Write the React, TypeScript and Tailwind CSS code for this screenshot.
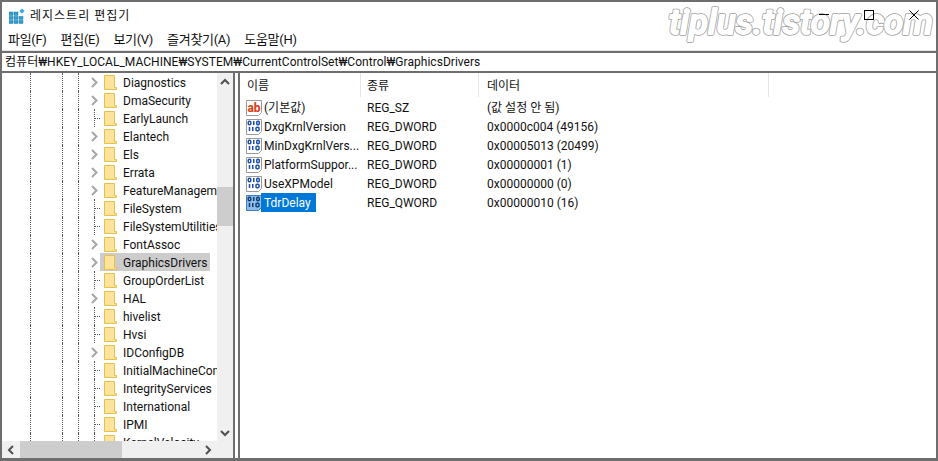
import React from 'react';

const tree: [string, boolean][] = [
  ['Diagnostics', true],
  ['DmaSecurity', true],
  ['EarlyLaunch', false],
  ['Elantech', true],
  ['Els', true],
  ['Errata', true],
  ['FeatureManagement', true],
  ['FileSystem', false],
  ['FileSystemUtilities', false],
  ['FontAssoc', true],
  ['GraphicsDrivers', true],
  ['GroupOrderList', false],
  ['HAL', true],
  ['hivelist', false],
  ['Hvsi', false],
  ['IDConfigDB', true],
  ['InitialMachineConfig', false],
  ['IntegrityServices', false],
  ['International', false],
  ['IPMI', false],
  ['KernelVelocity', false],
];

const values = [
  { name: '(기본값)', type: 'REG_SZ', data: '(값 설정 안 됨)', icon: 'ab' },
  { name: 'DxgKrnlVersion', type: 'REG_DWORD', data: '0x0000c004 (49156)', icon: 'bin' },
  { name: 'MinDxgKrnlVers...', type: 'REG_DWORD', data: '0x00005013 (20499)', icon: 'bin' },
  { name: 'PlatformSuppor...', type: 'REG_DWORD', data: '0x00000001 (1)', icon: 'bin' },
  { name: 'UseXPModel', type: 'REG_DWORD', data: '0x00000000 (0)', icon: 'bin' },
  { name: 'TdrDelay', type: 'REG_QWORD', data: '0x00000010 (16)', icon: 'bin' },
];

const menus = ['파일(F)', '편집(E)', '보기(V)', '즐겨찾기(A)', '도움말(H)'];

const AppIcon = () => (
  <svg width="16" height="16" viewBox="0 0 16 16">
    <g fill="#2a9fd8" stroke="#17688f" strokeWidth="0.4">
      <rect x="0" y="4" width="4" height="3.5" />
      <rect x="5" y="4" width="4" height="3.5" />
      <rect x="0" y="8.5" width="4" height="3" />
      <rect x="5" y="8.5" width="4" height="3" />
      <rect x="10" y="8.5" width="4" height="3" />
      <rect x="0" y="12.5" width="4" height="3" />
      <rect x="5" y="12.5" width="4" height="3" />
      <rect x="10" y="12.5" width="4" height="3" />
    </g>
    <path d="M13 0.5l2.6 2.6-2.6 2.6-2.6-2.6z" fill="#3aa7dc" />
  </svg>
);

const Folder = () => (
  <svg width="13" height="15" viewBox="0 0 13 15" className="shrink-0">
    <path d="M0.5 0.5H10.5V12.5H12.5V14.5H0.5Z" fill="#fde49a" stroke="#e8bf4a" />
  </svg>
);

const Chevron = () => (
  <svg width="7" height="11" viewBox="0 0 7 11">
    <path d="M1 1l4.5 4.500L1 10" fill="none" stroke="#a6a6a6" strokeWidth="2" />
  </svg>
);

const ValueIcon = ({ kind, selected }: { kind: string; selected: boolean }) => {
  const ink = selected ? '#123f78' : '#1b4fb0';
  return (
    <svg width="16" height="16" viewBox="0 0 16 16" className="shrink-0">
      <path d="M0.5 0.500H15.500V12.500L12.500 15.500H0.500Z" fill={selected ? '#8fbce6' : '#fff'} stroke={selected ? '#3d7fc0' : '#9a9a9a'} />
      {kind === 'ab' ? (
        <text x="8" y="11.500" textAnchor="middle" fontSize="12" fontWeight="800" fill="#d8431c" fontFamily="Roboto, sans-serif">ab</text>
      ) : (
        <g fill="none" stroke={ink} strokeWidth="1.500">
          <rect x="2.250" y="2.250" width="2.500" height="3.500" rx="1" />
          <path d="M7.750 2v4" />
          <rect x="10.750" y="2.250" width="2.500" height="3.500" rx="1" />
          <path d="M3.500 8v4" />
          <path d="M6.750 8v4" />
          <rect x="10" y="8.250" width="3" height="3.500" rx="1" />
        </g>
      )}
    </svg>
  );
};

export default function App() {
  return (
    <div
      className="relative w-[938px] h-[461px] overflow-hidden bg-white border-2 border-b-[3px] border-[#6e6e6e] text-[12px] text-[#111] flex flex-col"
      style={{ fontFamily: 'Roboto, "Noto Sans CJK KR", sans-serif' }}
    >
      {/* Title bar */}
      <div className="relative h-[28px] shrink-0 flex items-center pl-[7px] pb-[1px]">
        <AppIcon />
        <span className="ml-[5px] tracking-[1px]">레지스트리 편집기</span>
        <div className="relative z-10 ml-auto flex items-center gap-[35px] pr-[17px] pb-[2px]">
          <div className="w-[10px] h-px bg-black" />
          <div className="w-[10px] h-[10px] border border-black" />
          <svg width="10" height="10" viewBox="0 0 10 10">
            <path d="M0.500 0.500l9 9M9.500 0.500l-9 9" stroke="#000" />
          </svg>
        </div>
      </div>

      {/* Menu */}
      <div className="h-[21px] shrink-0 flex items-center pl-[6px] gap-[14px] text-[13px] tracking-[-0.3px] border-b border-[#e5e5e5]">
        {menus.map((m) => (
          <span key={m} className="whitespace-nowrap">{m}</span>
        ))}
      </div>

      {/* Address bar */}
      <div className="h-[22px] shrink-0 flex items-center pl-[3px] border-y-2 border-[#6e6e6e] whitespace-nowrap tracking-[0.03px]">
        컴퓨터₩HKEY_LOCAL_MACHINE₩SYSTEM₩CurrentControlSet₩Control₩GraphicsDrivers
      </div>

      <div className="flex-1 flex min-h-0">
        {/* Tree */}
        <div className="w-[231px] shrink-0 flex flex-col">
          <div className="flex-1 flex min-h-0">
            <div className="w-[215px] overflow-hidden">
              {tree.map(([name, expandable]) => (
                <div key={name} className="h-[18px] flex items-center">
                  <div className="w-[28px] h-full shrink-0" />
                  <div className="w-[32px] h-full shrink-0 border-l border-dotted border-[#555]" />
                  <div className="w-[16px] h-full shrink-0 border-l border-dotted border-[#555]" />
                  <div className="w-[16px] h-full shrink-0 border-l border-dotted border-[#555]" />
                  {expandable ? (
                    <div className="w-[6px] h-full shrink-0 flex items-center">
                      <div className="-ml-[3px]"><Chevron /></div>
                    </div>
                  ) : (
                    <div className="w-[6px] h-full shrink-0 flex items-center border-l border-dotted border-[#555]">
                      <div className="w-[5px] border-t border-dotted border-[#555]" />
                    </div>
                  )}
                  <div className={`h-full flex items-center pl-[4px] pr-[2px] whitespace-nowrap ${name === 'GraphicsDrivers' ? 'bg-[#cccccc]' : ''}`}>
                    <Folder />
                    <span className="ml-[6px] pt-px">{name}</span>
                  </div>
                </div>
              ))}
            </div>
            {/* Vertical scrollbar */}
            <div className="w-[16px] shrink-0 bg-[#f0f0f0] flex flex-col items-center">
              <svg width="10" height="16" viewBox="0 0 10 16">
                <path d="M1 11l4-4 4 4" fill="none" stroke="#505050" strokeWidth="2" />
              </svg>
              <div className="mt-[98px] w-full h-[39px] bg-[#cdcdcd]" />
              <svg className="mt-auto" width="10" height="16" viewBox="0 0 10 16">
                <path d="M1 6l4 4 4-4" fill="none" stroke="#505050" strokeWidth="2" />
              </svg>
            </div>
          </div>
          {/* Horizontal scrollbar */}
          <div className="h-[17px] shrink-0 bg-[#f0f0f0] flex items-center">
            <div className="w-[18px] flex justify-center">
              <svg width="8" height="10" viewBox="0 0 8 10">
                <path d="M6 1L2 5l4 4" fill="none" stroke="#505050" strokeWidth="2" />
              </svg>
            </div>
            <div className="w-[102px] h-full bg-[#cdcdcd]" />
            <div className="ml-auto w-[18px] flex justify-center mr-[16px]">
              <svg width="8" height="10" viewBox="0 0 8 10">
                <path d="M2 1l4 4-4 4" fill="none" stroke="#505050" strokeWidth="2" />
              </svg>
            </div>
          </div>
        </div>

        {/* Splitter */}
        <div className="w-[7px] shrink-0 border-x-2 border-[#6e6e6e]" />

        {/* Values */}
        <div className="flex-1 min-w-0">
          <div className="h-[24px] flex items-center">
            <div className="w-[121px] h-full flex items-center pl-[7px] pt-px border-r border-[#e5e5e5]">이름</div>
            <div className="w-[118px] h-full flex items-center pl-[6px] pt-px border-r border-[#e5e5e5]">종류</div>
            <div className="w-[290px] h-full flex items-center pl-[8px] pt-px border-r border-[#e5e5e5]">데이터</div>
          </div>
          <div className="pt-[1px]">
            {values.map((v) => {
              const selected = v.name === 'TdrDelay';
              return (
                <div key={v.name} className="h-[19px] flex items-center">
                  <div className="w-[121px] pl-[6px] flex items-center whitespace-nowrap">
                    <ValueIcon kind={v.icon} selected={selected} />
                    <span className={`-ml-px pl-[3px] pr-[5px] pt-px leading-[18px] ${selected ? 'bg-[#0078d7] text-white' : ''}`}>{v.name}</span>
                  </div>
                  <div className="w-[120px] pl-[6px]">{v.type}</div>
                  <div className="pl-[6px]">{v.data}</div>
                </div>
              );
            })}
          </div>
        </div>
      </div>

      {/* Blog watermark */}
      <svg className="absolute left-[664px] top-[-1px]" width="272" height="48" viewBox="0 0 272 48">
        <defs>
          <text id="watermark" x="3" y="33" fontSize="35" fontStyle="italic" fontWeight="500" fontFamily="Roboto, sans-serif">
            tiplus.tistory.com
          </text>
        </defs>
        <use href="#watermark" fill="#fff" stroke="#a0a0a0" strokeWidth="3.400" strokeLinejoin="round" />
        <use href="#watermark" fill="#fff" stroke="#fff" strokeWidth="1.800" strokeLinejoin="round" />
      </svg>
    </div>
  );
}
